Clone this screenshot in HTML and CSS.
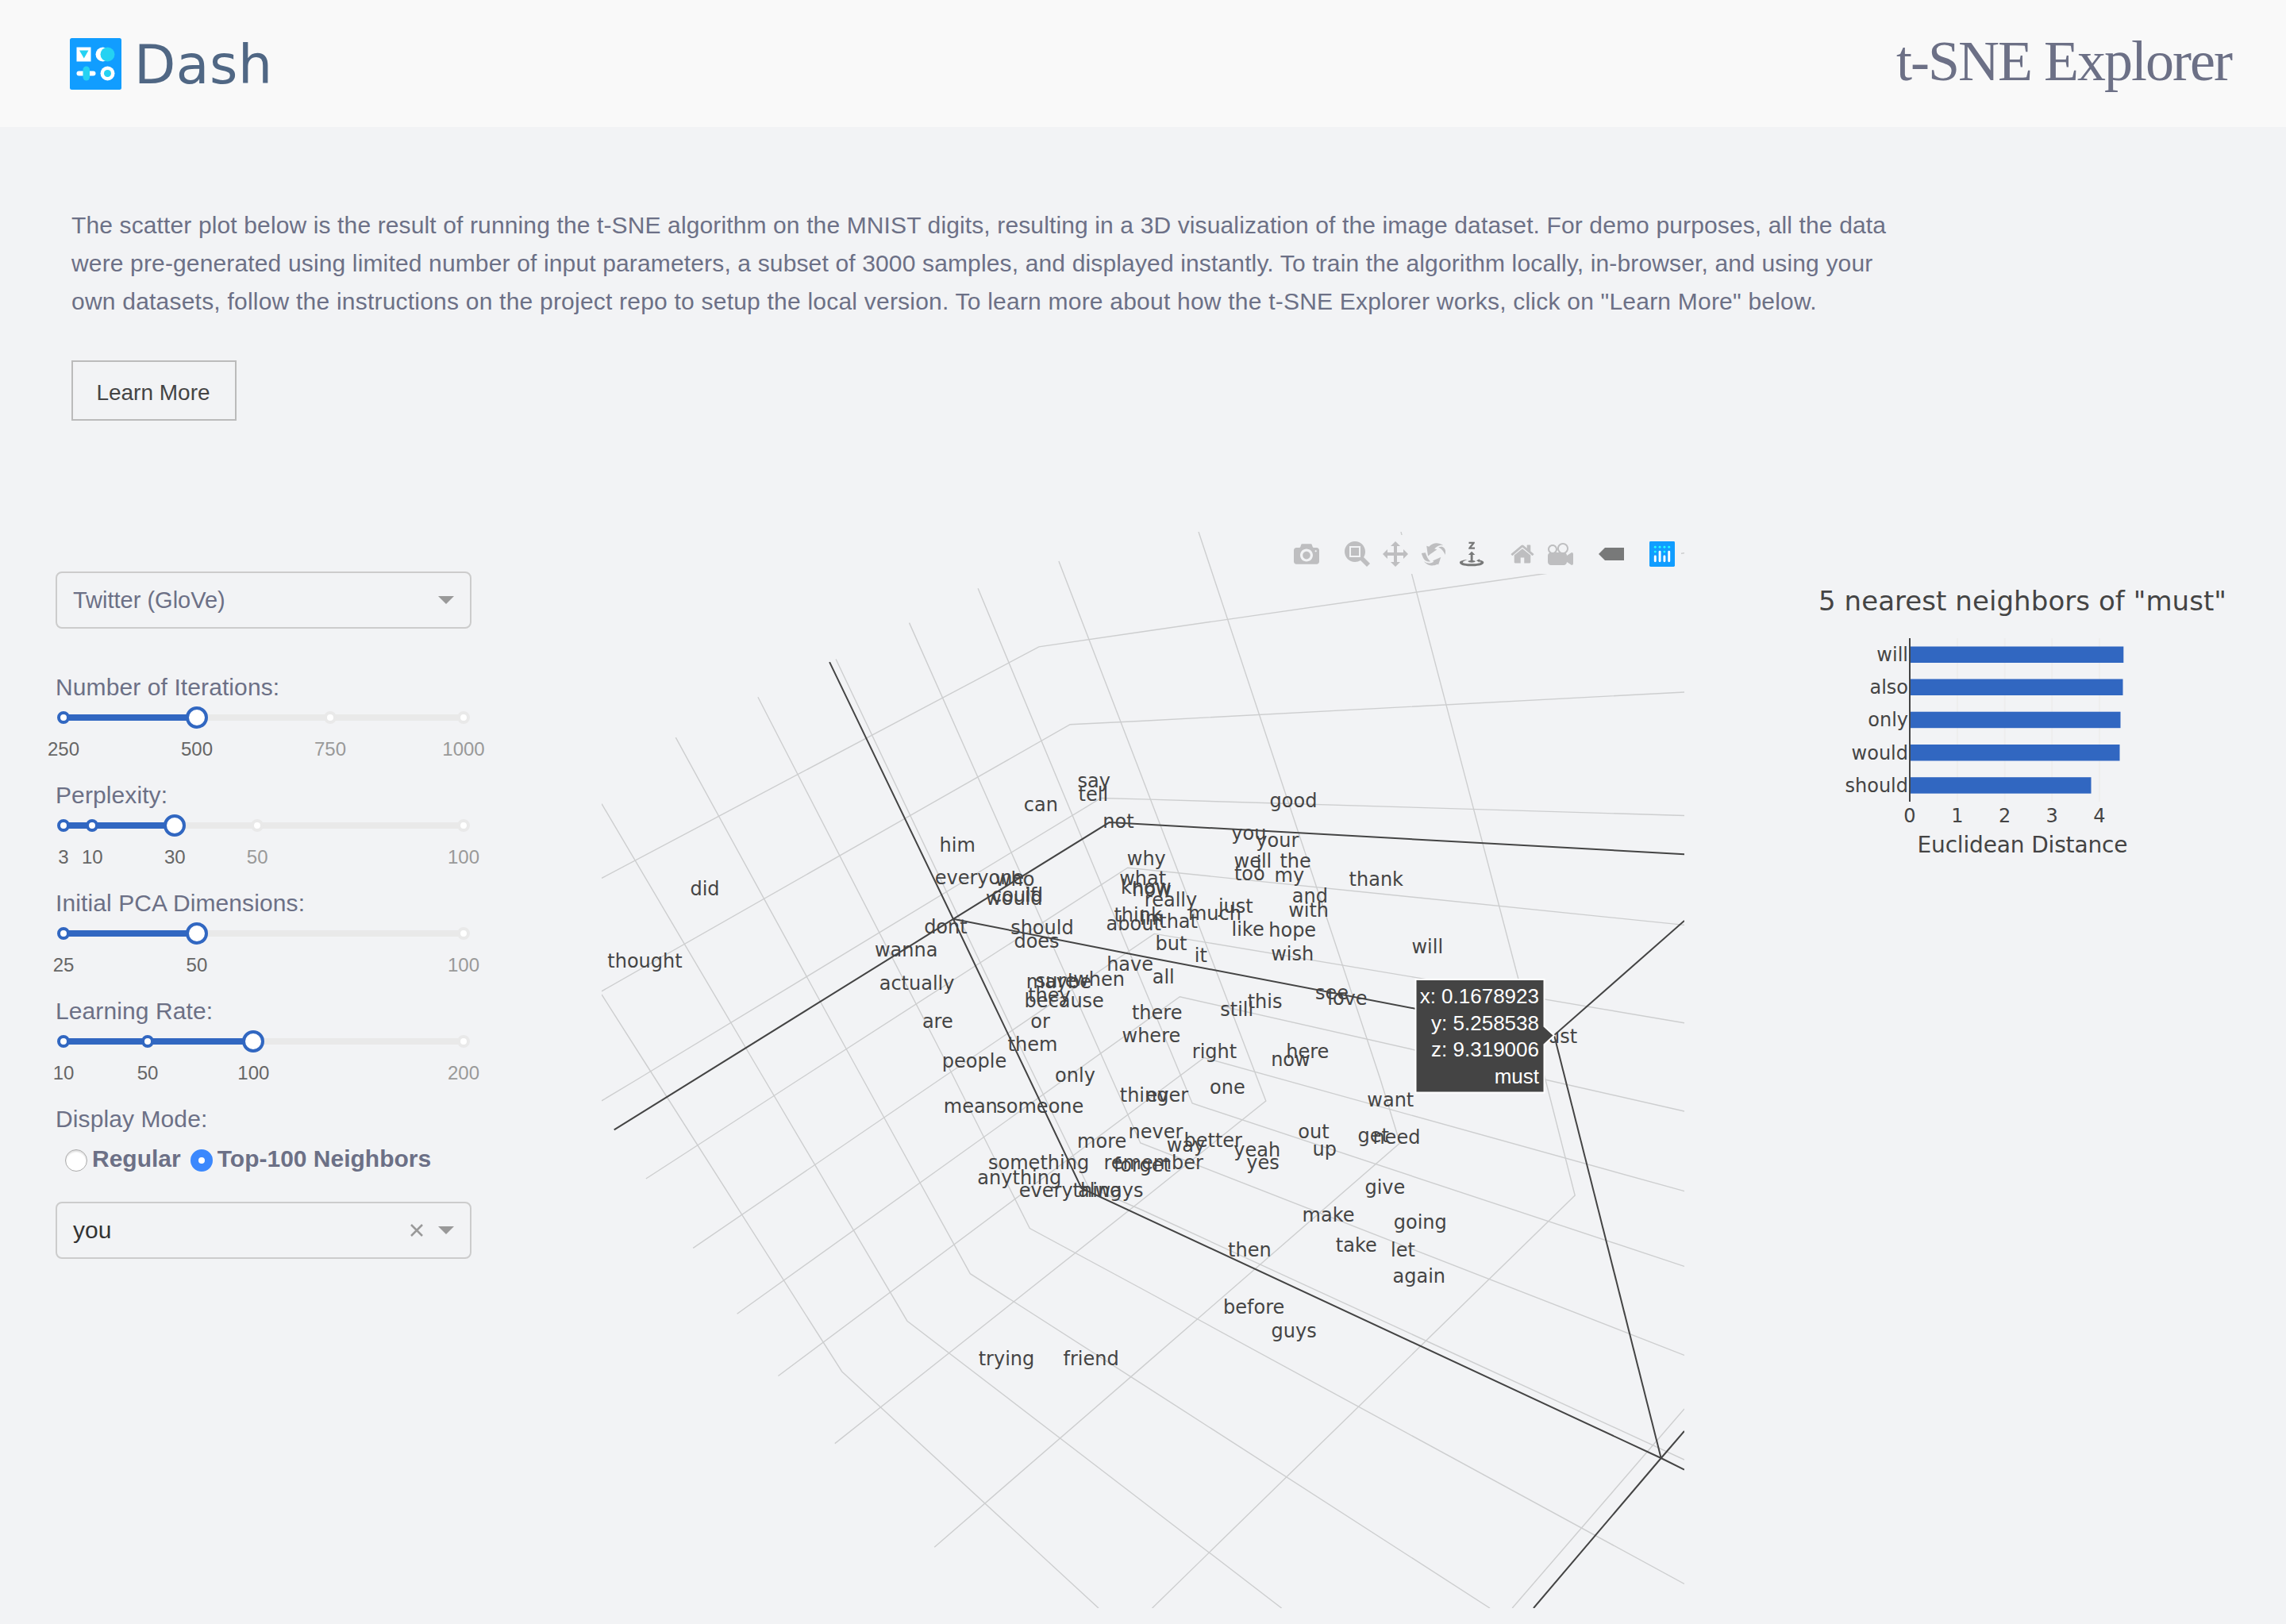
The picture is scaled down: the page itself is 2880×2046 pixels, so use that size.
FILE: index.html
```html
<!DOCTYPE html>
<html lang="en">
<head>
<meta charset="utf-8">
<title>t-SNE Explorer</title>
<link rel="stylesheet" href="styles.css">
</head>
<body>
<header class="header">
  <div class="brand">
    <svg class="brand-mark" viewBox="0 0 65 65">
      <rect width="65" height="65" rx="2.5" fill="#119dff"/>
      <rect x="8.5" y="11.5" width="18" height="18" fill="#fff"/>
      <path d="M12 15.500H23.500L17.800 25.500Z" fill="#25d2f2"/>
      <circle cx="41.500" cy="20.500" r="9" fill="#fff"/>
      <circle cx="47.500" cy="20.500" r="9" fill="#25d2f2"/>
      <rect x="8.500" y="41.500" width="24" height="6" rx="3" fill="#fff"/>
      <rect x="16.500" y="35.500" width="8.500" height="18" rx="4.200" fill="#25d2f2"/>
      <circle cx="47.500" cy="44.500" r="9" fill="#fff"/>
      <circle cx="47.500" cy="44.500" r="4.500" fill="#25d2f2"/>
    </svg>
    <svg class="brand-name" viewBox="0 0 190 90"><text x="5" y="57" textLength="174">Dash</text></svg>
  </div>
  <h1 class="title">t-SNE Explorer</h1>
</header>

<section class="intro">
  <p><span class="line-1">The scatter plot below is the result of running the t-SNE algorithm on the MNIST digits, resulting in a 3D visualization of the image dataset. For demo purposes, all the data</span><br><span class="line-2">were pre-generated using limited number of input parameters, a subset of 3000 samples, and displayed instantly. To train the algorithm locally, in-browser, and using your</span><br><span class="line-3">own datasets, follow the instructions on the project repo to setup the local version. To learn more about how the t-SNE Explorer works, click on "Learn More" below.</span></p>
  <button class="learn">Learn More</button>
</section>

<main class="main">
  <aside class="sidebar">
    <div class="select"><span>Twitter (GloVe)</span><i class="caret"></i></div>

    <div class="field first">
      <label>Number of Iterations:</label>
      <div class="slider">
        <div class="track" style="width:33.33%"></div>
        <i class="dot on" style="left:0%"></i><i class="dot" style="left:66.67%"></i><i class="dot" style="left:100%"></i>
        <i class="handle" style="left:33.33%"></i>
        <span class="mark on" style="left:0%">250</span><span class="mark on" style="left:33.33%">500</span><span class="mark" style="left:66.67%">750</span><span class="mark" style="left:100%">1000</span>
      </div>
    </div>
    <div class="field">
      <label>Perplexity:</label>
      <div class="slider">
        <div class="track" style="width:27.84%"></div>
        <i class="dot on" style="left:0%"></i><i class="dot on" style="left:7.22%"></i><i class="dot" style="left:48.45%"></i><i class="dot" style="left:100%"></i>
        <i class="handle" style="left:27.84%"></i>
        <span class="mark on" style="left:0%">3</span><span class="mark on" style="left:7.22%">10</span><span class="mark on" style="left:27.84%">30</span><span class="mark" style="left:48.45%">50</span><span class="mark" style="left:100%">100</span>
      </div>
    </div>
    <div class="field">
      <label>Initial PCA Dimensions:</label>
      <div class="slider">
        <div class="track" style="width:33.33%"></div>
        <i class="dot on" style="left:0%"></i><i class="dot" style="left:100%"></i>
        <i class="handle" style="left:33.33%"></i>
        <span class="mark on" style="left:0%">25</span><span class="mark on" style="left:33.33%">50</span><span class="mark" style="left:100%">100</span>
      </div>
    </div>
    <div class="field">
      <label>Learning Rate:</label>
      <div class="slider">
        <div class="track" style="width:47.5%"></div>
        <i class="dot on" style="left:0%"></i><i class="dot on" style="left:21.05%"></i><i class="dot" style="left:100%"></i>
        <i class="handle" style="left:47.5%"></i>
        <span class="mark on" style="left:0%">10</span><span class="mark on" style="left:21.05%">50</span><span class="mark on" style="left:47.5%">100</span><span class="mark" style="left:100%">200</span>
      </div>
    </div>
    <div class="mode">
      <label>Display Mode:</label>
      <div class="radios">
        <span class="radio"></span><b>Regular</b>
        <span class="radio checked"></span><b>Top-100 Neighbors</b>
      </div>
    </div>
    <div class="select word"><span>you</span><svg class="clear" viewBox="0 0 18 18"><path d="M2 2L16 16M16 2L2 16"/></svg><i class="caret"></i></div>
  </aside>

  <div class="plot">
    <svg class="scene" viewBox="758 670 1364 1356">
      <g class="grid">
        <path d="M758 1253L813.400 1340L1060.700 1728L1384 2026"/>
        <path d="M758 1012.700L951.300 1340L1142.900 1664.200L1450 1899.700L1614.600 2026"/>
        <path d="M851.300 929.200L1076.300 1340L1222.300 1604.700L1440 1744.300L1877 2026"/>
        <path d="M954.900 878.300L1192.900 1340L1297.300 1547.600L1440 1624.500L2122 1995.500"/>
        <path d="M1053.100 830.500L1295.500 1340L1371 1495L1440 1525L2122 1839"/>
        <path d="M1145.500 784.600L1436.800 1440L2122 1707.400"/>
        <path d="M1232.100 741.300L1502.100 1390L2122 1595.400"/>
        <path d="M1333.900 706.900L1431.400 960L1594.800 1387L1450 1503L1051.800 1818.600"/>
        <path d="M1510 670L1739.100 1360L1763.700 1440L1440 1721.400L1177.200 1949.200"/>
        <path d="M1765 670L1778.400 722.500L1913 1233.700L1947.600 1362.500L1984.200 1506L1451.600 2026"/>
        <path d="M2122 1774.900L1905.200 2026"/>
        <path d="M758 1106.400L1308.900 814.900L1440 795.700L1947.600 722.500L2122 696.800"/>
        <path d="M758 1248.800L1348.200 912.700L1440 908.200L2122 872"/>
        <path d="M758 1386.800L802.700 1360L1387 1005.500L1440 1006.900L2122 1027.500"/>
        <path d="M813.800 1485L1006.700 1360L1420.700 1093.200L2122 1165.400"/>
        <path d="M873.200 1572.300L1184 1360L1454.300 1176.400L1782.900 1231.400L2122 1288.700"/>
        <path d="M928.600 1655.200L1486.400 1255.700L1782.900 1323L2122 1400"/>
        <path d="M980.400 1733.500L1517.100 1332.500L2122 1500.700"/>
      </g>
      <g class="axes">
        <path d="M1045.100 834.100L1200.900 1157.800L1362.500 1497L2092.700 1837L2122 1851.600"/>
        <path d="M773.700 1423.300L1200.900 1157.800L1397.500 1036.100L2122 1076.200"/>
        <path d="M1200.900 1157.800L1440 1205L1782.900 1270.700L1958 1304.200L2122 1160"/>
        <path d="M1958 1304.200L2092.700 1837"/>
        <path d="M2122 1802.900L2092.700 1837L1932 2026"/>
      </g>
      <g class="words">
        <text x="1378.200" y="992">say</text><text x="1377.300" y="1009">tell</text><text x="1311.400" y="1022">can</text><text x="1408.900" y="1042.500">not</text>
        <text x="1629.500" y="1016.500">good</text><text x="1206.200" y="1072.800">him</text><text x="1444.300" y="1090">why</text><text x="1573.400" y="1058">you</text>
        <text x="1609.300" y="1067">your</text><text x="1578.400" y="1092.500">well</text><text x="1632.100" y="1092.500">the</text><text x="1586" y="1096">i</text>
        <text x="1574.300" y="1109">too</text><text x="1624.300" y="1111.400">my</text><text x="1733.800" y="1115.800">thank</text><text x="1233.900" y="1113.600">everyone</text>
        <text x="1278.600" y="1116.400">who</text><text x="1281.500" y="1135.500">could</text><text x="1277.800" y="1140">would</text><text x="1298.600" y="1135.500">if</text>
        <text x="1439.700" y="1115.400">what</text><text x="1443.600" y="1126.400">know</text><text x="1451" y="1129">how</text><text x="1475" y="1141.800">really</text>
        <text x="1433.600" y="1161.300">think</text><text x="1428.200" y="1171.800">about</text><text x="1451" y="1165">im</text><text x="1484.600" y="1169">that</text>
        <text x="1530.400" y="1159">much</text><text x="1556.800" y="1150">just</text><text x="1650.400" y="1136.800">and</text><text x="1648.600" y="1155">with</text>
        <text x="1572.100" y="1179.300">like</text><text x="1628.200" y="1179.600">hope</text><text x="1628.200" y="1209.600">wish</text><text x="1475.400" y="1196.800">but</text>
        <text x="1512.900" y="1212">it</text><text x="1423.600" y="1222.500">have</text><text x="1465.700" y="1239.300">all</text><text x="1384.600" y="1241.800">when</text>
        <text x="1333.900" y="1245.400">maybe</text><text x="1330.700" y="1244">sure</text><text x="1322" y="1262">they</text><text x="1340.700" y="1268.600">because</text>
        <text x="1191.400" y="1176">dont</text><text x="1312.900" y="1176.800">should</text><text x="1306" y="1194">does</text><text x="1141.700" y="1204.600">wanna</text>
        <text x="1155.100" y="1246.600">actually</text><text x="1181.300" y="1294.500">are</text><text x="1310.500" y="1294.500">or</text><text x="1457.700" y="1283.600">there</text>
        <text x="1593.600" y="1270.400">this</text><text x="1558.200" y="1280">still</text><text x="1677.900" y="1259.300">see</text><text x="1697.400" y="1265.800">love</text>
        <text x="1450.400" y="1312.600">where</text><text x="1300.900" y="1323.500">them</text><text x="1227.500" y="1344.600">people</text><text x="1530" y="1332.500">right</text>
        <text x="1647.300" y="1332.500">here</text><text x="1625.900" y="1342.500">now</text><text x="1354.500" y="1363.200">only</text><text x="1546.400" y="1377.500">one</text>
        <text x="1441.600" y="1387.500">thing</text><text x="1470.400" y="1387.500">ever</text><text x="1222.800" y="1402">mean</text><text x="1310.300" y="1402">someone</text>
        <text x="1456" y="1433.500">never</text><text x="1388.200" y="1446">more</text><text x="1493.900" y="1450.700">way</text><text x="1528.200" y="1444.500">better</text>
        <text x="1655" y="1433.600">out</text><text x="1668.800" y="1455.700">up</text><text x="1583.800" y="1456.600">yeah</text><text x="1591" y="1472.500">yes</text>
        <text x="1308.600" y="1473">something</text><text x="1453.200" y="1473">remember</text><text x="1438.900" y="1476">forget</text><text x="1284.300" y="1491.500">anything</text>
        <text x="1348.600" y="1508.400">everything</text><text x="1399.300" y="1508.400">always</text><text x="1751.800" y="1393.600">want</text><text x="1730.200" y="1438.500">get</text>
        <text x="1759.400" y="1440.600">need</text><text x="1744.900" y="1504.300">give</text><text x="1673.500" y="1539">make</text><text x="1789.300" y="1548">going</text>
        <text x="1708.800" y="1576.600">take</text><text x="1767.500" y="1582.700">let</text><text x="1574.400" y="1583.300">then</text><text x="1787.800" y="1616">again</text>
        <text x="1579.700" y="1655.200">before</text><text x="1630.200" y="1685.300">guys</text><text x="1798.300" y="1200.600">will</text><text x="1957" y="1314">must</text>
        <text x="1268" y="1720">trying</text><text x="1374.600" y="1720">friend</text><text x="888" y="1127.900">did</text><text x="812.500" y="1219.400">thought</text>
      </g>
      <g class="tip">
        <path d="M1783.500 1234H1945.500V1293L1958 1304.500L1945.500 1316V1376.500H1783.500Z"/>
        <text x="1939" y="1264">x: 0.1678923</text><text x="1939" y="1297.500">y: 5.258538</text><text x="1939" y="1331">z: 9.319006</text><text x="1939" y="1364.500">must</text>
      </g>
    </svg>
    <div class="modebar">
      <div class="group"><svg viewBox="0 0 1000 1000"><path transform="matrix(1 0 0 -1 0 850)" d="m500 450c-83 0-150-67-150-150 0-83 67-150 150-150 83 0 150 67 150 150 0 83-67 150-150 150z m400 150h-120c-16 0-34 13-39 29l-31 93c-6 15-23 28-40 28h-340c-16 0-34-13-39-28l-31-94c-6-15-23-28-40-28h-120c-55 0-100-45-100-100v-450c0-55 45-100 100-100h800c55 0 100 45 100 100v450c0 55-45 100-100 100z m-400-550c-138 0-250 112-250 250 0 138 112 250 250 250 138 0 250-112 250-250 0-138-112-250-250-250z m365 380c-19 0-35 16-35 35 0 19 16 35 35 35 19 0 35-16 35-35 0-19-16-35-35-35z"/></svg></div>
      <div class="group">
        <svg viewBox="0 0 1000 1000"><path transform="matrix(1 0 0 -1 0 850)" d="m1000-25l-250 251c40 63 63 138 63 218 0 224-182 406-407 406-224 0-406-182-406-406s183-406 407-406c80 0 155 22 218 62l250-250 125 125z m-812 250l0 438 437 0 0-438-437 0z m62 375l313 0 0-312-313 0 0 312z"/></svg>
        <svg viewBox="0 0 1000 1000"><path transform="matrix(1 0 0 -1 0 850)" d="m1000 350l-187 188 0-125-250 0 0 250 125 0-188 187-187-187 125 0 0-250-250 0 0 125-188-188 186-187 0 125 252 0 0-250-125 0 187-188 188 188-125 0 0 250 250 0 0-126 187 188z"/></svg>
        <svg viewBox="0 0 1000 1000"><path transform="matrix(1 0 0 -1 0 850)" d="m922 660c-5 4-9 7-14 11-359 263-580-31-580-31l-102 28 58-400c0 1 1 1 2 2 118 108 351 249 351 249s-62 27-100 42c88 83 222 183 347 122 16-8 30-17 44-27-2 1-4 2-6 4z m36-329c0 0 64 229-88 296-62 27-124 14-175-11 157-78 225-208 249-266 8-19 11-31 11-31 2 5 6 15 11 32-5-13-8-20-8-20z m-775-239c70-31 117-50 198-32-121 80-199 346-199 346l-96-15-58-12c0 0 55-226 155-287z m603 133l-317-139c0 0 4-4 19-14 7-5 24-15 24-15s-177-147-389 4c235-287 536-112 536-112l31-22 100 299-4-1z m-298-153c6-4 14-9 24-15 0 0-17 10-24 15z"/></svg>
        <svg class="active" viewBox="0 0 1000 1000"><path transform="matrix(1 0 0 -1 0 850)" d="m833 5l-17 108v41l-130-65 130-66c0 0 0 38 0 39 0-1 36-14 39-25 4-15-6-22-16-30-15-12-39-16-56-20-90-22-187-23-279-23-261 0-341 34-353 59 3 60 228 110 228 110-140-8-351-35-351-116 0-120 293-142 474-142 155 0 477 22 477 142 0 50-74 79-163 96z m-374 94c-58-5-99-21-99-40 0-24 65-43 144-43 79 0 143 19 143 43 0 19-42 34-98 40v216h87l-132 135-133-135h88v-216z m167 515h-136v1c16 16 31 34 46 52l84 109v54h-230v-71h124v-1c-16-17-28-32-44-51l-89-114v-51h245v72z"/></svg>
      </div>
      <div class="group">
        <svg viewBox="0 0 928.6 1000"><path transform="matrix(1 0 0 -1 0 850)" d="m786 296v-267q0-15-11-26t-25-10h-214v214h-143v-214h-214q-15 0-25 10t-11 26v267q0 1 0 2t0 2l321 264 321-264q1-1 1-4z m124 39l-34-41q-5-5-12-6h-2q-7 0-12 3l-386 322-386-322q-7-4-13-4-7 2-12 7l-35 41q-4 5-3 13t6 12l401 334q18 15 42 15t43-15l136-114v109q0 8 5 13t13 5h107q8 0 13-5t5-13v-227l122-102q5-5 6-12t-4-13z"/></svg>
        <svg viewBox="0 0 1000 1000"><path transform="matrix(1 0 0 -1 0 850)" d="m938 413l-188-125c0 37-17 71-44 94 64 38 107 107 107 187 0 121-98 219-219 219-121 0-219-98-219-219 0-61 25-117 66-156h-115c30 33 49 76 49 125 0 103-84 187-187 187s-188-84-188-187c0-57 26-107 65-141-38-22-65-62-65-109v-250c0-70 56-126 125-126h500c69 0 125 56 125 126l188-126c34 0 62 28 62 63v375c0 35-28 63-62 63z m-750 0c-69 0-125 56-125 125s56 125 125 125 125-56 125-125-56-125-125-125z m406-1c-87 0-157 70-157 157 0 86 70 156 157 156s156-70 156-156-70-157-156-157z"/></svg>
      </div>
      <div class="group"><svg class="active" viewBox="0 0 1500 1000"><path transform="matrix(1 0 0 -1 0 850)" d="m375 725l0 0-375-375 375-374 0-1 1125 0 0 750-1125 0z"/></svg></div>
      <div class="group"><svg class="logo" viewBox="0 0 132 132"><rect fill="#119dff" width="132" height="132" rx="6"/><g fill="#25fefd"><circle cx="78" cy="54" r="6"/><circle cx="102" cy="30" r="6"/><circle cx="78" cy="30" r="6"/><circle cx="54" cy="30" r="6"/><circle cx="30" cy="30" r="6"/><circle cx="30" cy="54" r="6"/></g><g fill="#fff"><rect x="24" y="72" width="12" height="36" rx="6"/><rect x="72" y="72" width="12" height="36" rx="6"/><rect x="48" y="48" width="12" height="60" rx="6"/><rect x="96" y="48" width="12" height="60" rx="6"/></g></svg></div>
    </div>
  </div>

  <svg class="bars" viewBox="2280 720 580 380">
    <text class="bars-title" x="2291" y="769" textLength="514">5 nearest neighbors of "must"</text>
    <path class="bars-grid" d="M2466 804V1010M2525.700 804V1010M2585.200 804V1010M2645 804V1010"/>
    <g class="bars-fill">
      <rect x="2406" y="814.500" width="269.300" height="20.500"/>
      <rect x="2406" y="855.500" width="268.500" height="20.500"/>
      <rect x="2406" y="896.700" width="265.500" height="20.500"/>
      <rect x="2406" y="938" width="264.500" height="20.500"/>
      <rect x="2406" y="979.200" width="228.500" height="20.500"/>
    </g>
    <path class="bars-axis" d="M2406 804V1010"/>
    <g class="bars-names">
      <text x="2404" y="832.700">will</text><text x="2404" y="874">also</text><text x="2404" y="915">only</text><text x="2404" y="956.700">would</text><text x="2404" y="997.700">should</text>
    </g>
    <g class="bars-ticks">
      <text x="2406" y="1035.700">0</text><text x="2466" y="1035.700">1</text><text x="2525.700" y="1035.700">2</text><text x="2585.200" y="1035.700">3</text><text x="2645" y="1035.700">4</text>
      <text class="bars-label" x="2548" y="1073.700" textLength="265">Euclidean Distance</text>
    </g>
  </svg>
</main>
</body>
</html>
```
FILE: styles.css
```css
* { box-sizing: border-box; }
body {
  margin: 0;
  width: 2880px;
  height: 2046px;
  overflow: hidden;
  background: #f2f3f5;
  color: #6c7086;
  font: 30px/48px "Liberation Sans", Arial, sans-serif;
}

.header {
  display: flex;
  justify-content: space-between;
  height: 160px;
  padding: 0 69px 0 88px;
  background: #f9f9f9;
}
.brand { display: flex; gap: 11px; padding-top: 48px; }
.brand-mark { width: 65px; height: 65px; }
.brand-name { width: 190px; height: 90px; }
.brand-name text { font: 68px "DejaVu Sans", sans-serif; fill: #506784; }
.title {
  margin: 35px 0 0;
  font: 400 72px/84px "Liberation Serif", serif;
  letter-spacing: -2px;
}

.intro { height: 510px; padding: 100px 90px 0; }
.intro p { margin: 0 0 50px; white-space: nowrap; }
.line-1 { letter-spacing: 0.127px; }
.line-2 { letter-spacing: 0.146px; }
.line-3 { letter-spacing: 0.215px; }
.learn {
  display: block;
  width: 208px;
  height: 76px;
  padding: 5px 2px 0 0;
  border: 2px solid #bbb;
  background: transparent;
  color: #444;
  font: 28px "Liberation Sans", Arial, sans-serif;
}

.main { display: flex; align-items: flex-start; padding-left: 70px; }

.sidebar { width: 524px; padding-top: 50px; }
.select {
  display: flex;
  align-items: center;
  height: 72px;
  padding: 0 20px;
  border: 2px solid #ccc;
  border-radius: 8px;
}
.select span { flex: 1; font-size: 29px; }
.select.word { margin-top: 30px; }
.select.word span { color: #333; font-size: 30px; }
.caret {
  border: 10px solid transparent;
  border-top-color: #999;
  border-bottom: 0;
}
.clear { width: 18px; height: 18px; margin-right: 18px; }
.clear path { stroke: #999; stroke-width: 2.5; }

.field { height: 136px; }
.field.first { margin-top: 50px; }
.field label, .mode label { display: block; height: 48px; line-height: 48px; letter-spacing: 0.1px; }
.slider {
  position: relative;
  height: 8px;
  margin: 10px 10px 0;
  background: #e9e9e9;
}
.track { height: 8px; background: #3167c1; }
.dot {
  position: absolute;
  top: -4px;
  width: 16px;
  height: 16px;
  margin-left: -8px;
  border: 4px solid #e9e9e9;
  border-radius: 50%;
  background: #fff;
}
.dot.on { border-color: #3167c1; }
.handle {
  position: absolute;
  top: -10px;
  width: 28px;
  height: 28px;
  margin-left: -14px;
  border: 4px solid #3167c1;
  border-radius: 50%;
  background: #fff;
}
.mark {
  position: absolute;
  top: 29px;
  transform: translateX(-50%);
  color: #999;
  font-size: 24px;
  line-height: 30px;
}
.mark.on { color: #666; }
.radios { display: flex; align-items: center; height: 48px; margin-top: 2px; padding-left: 12px; }
.radio {
  width: 28px;
  height: 28px;
  margin: 4px 6px 0 0;
  border: 1px solid #aaa;
  border-radius: 50%;
  background: #fff;
  box-shadow: inset 0 2px 2px #ddd;
}
.radio.checked { margin-left: 12px; border: 10px solid #3b88fd; box-shadow: none; }

.plot { position: relative; width: 1364px; height: 1356px; margin-left: 164px; }
.scene { display: block; width: 1364px; height: 1356px; }
.grid path { fill: none; stroke: #cdcecf; stroke-width: 1.4; }
.axes path { fill: none; stroke: #444; stroke-width: 2; }
.words text { font: 24px "DejaVu Sans", Verdana, sans-serif; fill: #444; text-anchor: middle; }
.tip path { fill: #444; stroke: #fff; stroke-width: 2; }
.tip text { font: 26px "Liberation Sans", Arial, sans-serif; fill: #fff; text-anchor: end; }
.modebar {
  position: absolute;
  top: 4px;
  right: 4px;
  display: flex;
  gap: 16px;
  height: 49px;
  padding: 8px 0;
  background: #f2f3f5;
}
.group { display: flex; }
.group svg { width: 32px; height: 32px; margin: 0 8px; fill: #444; fill-opacity: 0.3; }
.group svg.active { fill-opacity: 0.7; }
.group svg.logo { fill-opacity: 1; }

.bars { width: 580px; height: 380px; margin: 50px 0 0 158px; }
.bars text { font: 24px "DejaVu Sans", Verdana, sans-serif; fill: #444; }
.bars text.bars-title { font-size: 34px; }
.bars text.bars-label { font-size: 28px; }
.bars-grid { fill: none; stroke: #eee; stroke-width: 2; }
.bars-fill { fill: #3167c1; }
.bars-axis { stroke: #444; stroke-width: 2; }
.bars-names { text-anchor: end; }
.bars-ticks { text-anchor: middle; }
```
